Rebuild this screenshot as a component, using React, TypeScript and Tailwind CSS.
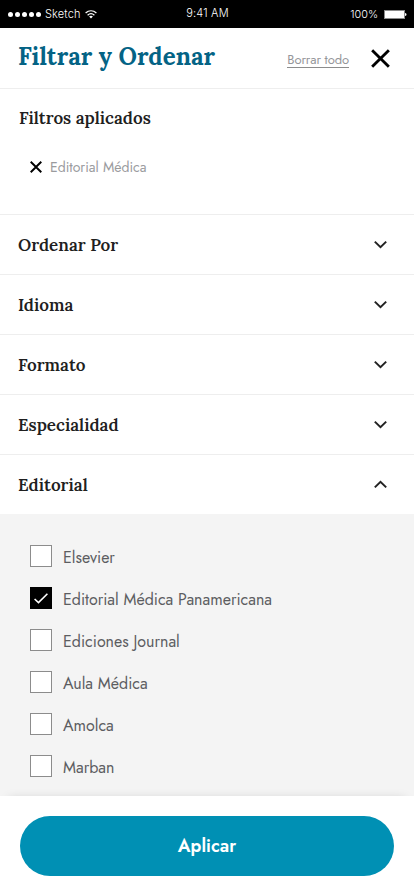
import React from 'react';

const serif = "font-['Lora','Liberation_Serif',serif]";
const sans = "font-['Jost','Lato',sans-serif]";

function StatusBar() {
  return (
    <div className="flex h-7 shrink-0 items-center bg-black font-['Inter',sans-serif] text-[11px] leading-none font-light text-white">
      <div className="flex flex-1 items-center pt-px pl-2">
        <div className="flex gap-[2px]">
          {[0, 1, 2, 3, 4].map((i) => (
            <span key={i} className="size-[5px] rounded-full bg-white" />
          ))}
        </div>
        <span className="ml-[4px] text-[11px] tracking-[0.15px]">Sketch</span>
        <svg className="ml-[4px]" width="12" height="9" viewBox="0 0 12 9" fill="none" stroke="white" strokeWidth="1.3">
          <path d="M.6 3C3.8.1 8.2.1 11.4 3" />
          <path d="M2.6 5.2c2-1.8 4.8-1.8 6.8 0" />
          <path d="M4.1 6.5 6 8.6l1.9-2.1c-1.1-1-2.7-1-3.8 0Z" fill="white" stroke="none" />
        </svg>
      </div>
      <span className="pb-px tracking-[0.2px]">9:41 AM</span>
      <div className="flex flex-1 items-center justify-end pr-[7px] pt-[2px]">
        <span className="text-[10.8px]">100%</span>
        <svg className="ml-[6px]" width="23" height="9" viewBox="0 0 23 9">
          <rect x=".5" y=".5" width="20" height="8" fill="white" stroke="#8b8b8b" />
          <path d="M21 3c2 .2 2 2.8 0 3Z" fill="white" />
        </svg>
      </div>
    </div>
  );
}

function Cross({ size, width }: { size: number; width: number }) {
  return (
    <svg width={size} height={size} viewBox="0 0 20 20" stroke="black" strokeWidth={width}>
      <path d="M1.2 1.2 18.8 18.8M18.8 1.2 1.2 18.8" />
    </svg>
  );
}

function Row({ label, open = false }: { label: string; open?: boolean }) {
  return (
    <button className="flex h-[60px] w-full shrink-0 items-center justify-between border-t border-[#eeeeee] pr-[27px] pl-[18px]">
      <span className={`${serif} text-[17px] leading-6 font-semibold text-[#202020]`}>{label}</span>
      <svg className={open ? 'mb-px' : 'mb-px rotate-180'} width="13" height="9" viewBox="0 0 13 9" fill="none" stroke="#222222" strokeWidth="2">
        <path d="M.8 7.4 6.5 1.8l5.7 5.6" />
      </svg>
    </button>
  );
}

function Option({ label, checked = false }: { label: string; checked?: boolean }) {
  return (
    <label className="flex h-[22px] items-center">
      <span className={`flex size-[22px] items-center justify-center border ${checked ? 'border-black bg-black' : 'border-[#8c8c8c] bg-white'}`}>
        {checked && (
          <svg width="14" height="11" viewBox="0 0 14 11" fill="none" stroke="white" strokeWidth="1.6">
            <path d="M.6 6 4.5 9.6 13.4.8" />
          </svg>
        )}
      </span>
      <span className={`${sans} ml-[11px] pt-[3px] text-[16px] leading-6 text-[#5c5d61]`}>{label}</span>
    </label>
  );
}

export default function App() {
  return (
    <div className="flex h-[896px] w-[414px] flex-col overflow-hidden bg-white">
      <StatusBar />
      <header className="flex h-[60px] shrink-0 items-center pr-[24px] pl-[18px]">
        <h1 className={`${serif} flex-1 pb-[2px] text-[24px] leading-8 font-bold tracking-[0.05px] text-[#046385]`}>Filtrar y Ordenar</h1>
        <button className={`${sans} mt-[5px] mr-[22px] border-b border-[#8c8c8c] text-[13px] leading-[14px] tracking-[-0.08px] text-[#95969a]`}>
          Borrar todo
        </button>
        <div className="mt-px">
          <Cross size={19} width={3} />
        </div>
      </header>
      <section className="h-[126px] shrink-0 border-t border-[#eeeeee] pt-[17px] pl-[19px]">
        <h2 className={`${serif} text-[17px] leading-6 font-semibold text-[#202020]`}>Filtros aplicados</h2>
        <div className="mt-[25px] ml-[11px] flex items-center gap-[8px]">
          <Cross size={12} width={3.2} />
          <span className={`${sans} text-[14px] leading-6 text-[#9a9b9e]`}>Editorial Médica</span>
        </div>
      </section>
      <Row label="Ordenar Por" />
      <Row label="Idioma" />
      <Row label="Formato" />
      <Row label="Especialidad" />
      <Row label="Editorial" open />
      <div className="flex h-[282px] shrink-0 flex-col gap-[20px] bg-[#f4f4f4] pt-[31px] pl-[30px]">
        <Option label="Elsevier" />
        <Option label="Editorial Médica Panamericana" checked />
        <Option label="Ediciones Journal" />
        <Option label="Aula Médica" />
        <Option label="Amolca" />
        <Option label="Marban" />
      </div>
      <footer className="h-[100px] shrink-0 bg-white px-5 pt-5 shadow-[0_-6px_10px_-9px_rgba(0,0,0,0.18)]">
        <button className={`${sans} h-[60px] w-full rounded-full bg-[#0090b4] text-[18px] font-semibold text-white`}>Aplicar</button>
      </footer>
    </div>
  );
}
